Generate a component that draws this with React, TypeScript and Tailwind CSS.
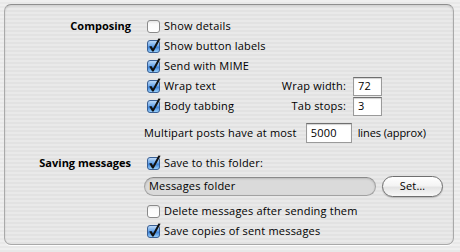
import React from "react";

function Check({ checked }: { checked: boolean }) {
  return (
    <svg width="13" height="13" viewBox="0 0 13 13" className="shrink-0 overflow-visible">
      <defs>
        <linearGradient id="cbon" x1="0" y1="0" x2="0" y2="1">
          <stop offset="0" stopColor="#c4def9" />
          <stop offset="0.45" stopColor="#6aa6ea" />
          <stop offset="0.55" stopColor="#3d82d8" />
          <stop offset="1" stopColor="#9fd6ff" />
        </linearGradient>
        <linearGradient id="cboff" x1="0" y1="0" x2="0" y2="1">
          <stop offset="0" stopColor="#e2e2e2" />
          <stop offset="0.3" stopColor="#fbfbfb" />
          <stop offset="1" stopColor="#ffffff" />
        </linearGradient>
      </defs>
      <rect
        x="0.5"
        y="0.5"
        width="12"
        height="12"
        rx="2.5"
        fill={checked ? "url(#cbon)" : "url(#cboff)"}
        stroke={checked ? "#3a5f93" : "#8a8a8a"}
      />
      {checked && (
        <path
          d="M2.2 6.6 L4.4 5.9 L6 8.6 L11.4 -1.6 L13.6 -1.2 L6.6 11.6 L5.2 11.6 Z"
          fill="#111"
        />
      )}
    </svg>
  );
}

function CheckRow({
  checked,
  label,
}: {
  checked: boolean;
  label: string;
}) {
  return (
    <div className="flex items-center gap-[4px] pl-[3px]">
      <Check checked={checked} />
      <span>{label}</span>
    </div>
  );
}

function Field({ value, w, h }: { value: string; w: string; h: string }) {
  return (
    <div
      className={`${w} ${h} flex items-center bg-white border border-[#9a9a9a] border-t-[#6f6f6f] shadow-[inset_0_1px_1px_rgba(0,0,0,0.18)] pl-[4px]`}
    >
      {value}
    </div>
  );
}

export default function App() {
  return (
    <div
      className="w-[460px] h-[252px] overflow-hidden text-[11px] tracking-[0.2px] text-black bg-[repeating-linear-gradient(180deg,#efefef_0px,#efefef_2px,#e8e8e8_2px,#e8e8e8_4px)] pt-[4px] pl-[4px]"
      style={{ fontFamily: '"Open Sans", "DejaVu Sans", sans-serif' }}
    >
      <div className="w-[450px] h-[241px] rounded-[7px] border border-[#a9a9a9] border-t-[#8e8e8e] bg-black/[0.025] shadow-[inset_0_1px_2px_rgba(0,0,0,0.12),0_1px_0_rgba(255,255,255,0.9)] pt-[11px]">
        {/* Composing */}
        <div className="flex">
          <div className="w-[127px] pr-[1px] text-right font-bold tracking-normal h-[20px] flex items-center justify-end">
            Composing
          </div>
          <div className="ml-[12px] flex flex-col w-[238px]">
            <div className="h-[20px] flex items-center">
              <CheckRow checked={false} label="Show details" />
            </div>
            <div className="h-[20px] flex items-center">
              <CheckRow checked={true} label="Show button labels" />
            </div>
            <div className="h-[20px] flex items-center">
              <CheckRow checked={true} label="Send with MIME" />
            </div>
            <div className="h-[20px] flex items-center justify-between">
              <CheckRow checked={true} label="Wrap text" />
              <div className="flex items-center gap-[7px]">
                <span>Wrap width:</span>
                <Field value="72" w="w-[29px]" h="h-[19px]" />
              </div>
            </div>
            <div className="h-[21px] flex items-center justify-between">
              <CheckRow checked={true} label="Body tabbing" />
              <div className="flex items-center gap-[7px]">
                <span>Tab stops:</span>
                <Field value="3" w="w-[29px]" h="h-[19px]" />
              </div>
            </div>
          </div>
        </div>

        {/* Multipart */}
        <div className="flex mt-[6px]">
          <div className="w-[127px]" />
          <div className="ml-[12px] h-[20px] flex items-center">
            <span>Multipart posts have at most</span>
            <div className="ml-[9px]">
              <Field value="5000" w="w-[46px]" h="h-[20px]" />
            </div>
            <span className="ml-[6px] tracking-[-0.1px]">lines (approx)</span>
          </div>
        </div>

        {/* Saving messages */}
        <div className="flex mt-[10px]">
          <div className="w-[127px] pr-[1px] text-right font-bold tracking-normal h-[20px] flex items-center justify-end">
            Saving messages
          </div>
          <div className="ml-[12px] flex flex-col">
            <div className="h-[20px] flex items-center">
              <CheckRow checked={true} label="Save to this folder:" />
            </div>
            <div className="mt-[3px] h-[21px] flex items-center">
              <div className="w-[232px] h-[19px] rounded-full border border-[#a2a2a2] border-t-[#8a8a8a] bg-[#dadada] shadow-[inset_0_1px_2px_rgba(0,0,0,0.15)] flex items-center pl-[4px]">
                Messages folder
              </div>
              <div className="ml-[6px] w-[61px] h-[21px] rounded-full border border-[#6f6f6f] bg-[linear-gradient(180deg,#ffffff_0%,#f4f4f4_45%,#e4e4e4_55%,#f8f8f8_100%)] shadow-[0_1px_1px_rgba(0,0,0,0.2)] flex items-center justify-center">
                Set…
              </div>
            </div>
            <div className="mt-[4px] h-[20px] flex items-center">
              <CheckRow checked={false} label="Delete messages after sending them" />
            </div>
            <div className="h-[20px] flex items-center">
              <CheckRow checked={true} label="Save copies of sent messages" />
            </div>
          </div>
        </div>
      </div>
    </div>
  );
}
